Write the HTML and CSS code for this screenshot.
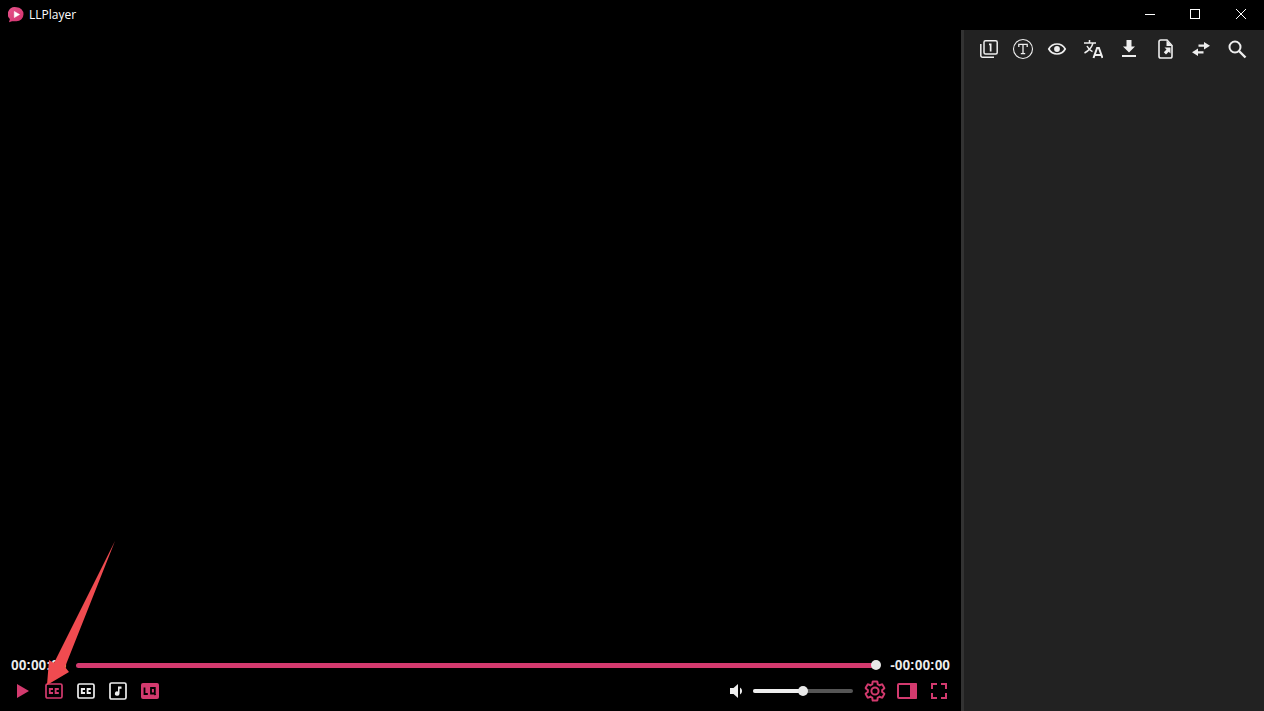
FILE: index.html
```html
<!DOCTYPE html>
<html lang="en">
<head>
    <meta charset="UTF-8">
    <title>LLPlayer</title>
    <link rel="stylesheet" href="styles.css">
</head>
<body>
    <div class="window">
        <!-- Title bar -->
        <div class="titlebar">
            <div class="app-name">
                <svg class="logo" width="16" height="16" viewBox="0 0 16 16">
                    <defs>
                        <linearGradient id="logoFill" x1="0" y1="0" x2="1" y2="1">
                            <stop offset="0" stop-color="#e8558c"/>
                            <stop offset="1" stop-color="#cf2f6c"/>
                        </linearGradient>
                    </defs>
                    <path d="M8.500 0.300a7 7 0 0 1 0 14H4l-3 1 .9-3.200A7 7 0 0 1 8.500 0.300z" fill="url(#logoFill)"/>
                    <path d="M6.300 4.500l5.200 3-5.200 3z" fill="#fff" stroke="#fff" stroke-width="0.600" stroke-linejoin="round"/>
                </svg>
                <span class="app-title">LLPlayer</span>
            </div>
            <div class="window-buttons">
                <button class="win-btn">
                    <svg width="12" height="12" viewBox="0 0 12 12"><path d="M2 6.500h10" stroke="#fff" fill="none"/></svg>
                </button>
                <button class="win-btn">
                    <svg width="12" height="12" viewBox="0 0 12 12"><rect x="1.500" y="1.500" width="9" height="9" stroke="#fff" fill="none"/></svg>
                </button>
                <button class="win-btn">
                    <svg width="12" height="12" viewBox="0 0 12 12"><path d="M1 1l10 10M11 1L1 11" stroke="#fff" fill="none"/></svg>
                </button>
            </div>
        </div>

        <div class="main">
            <!-- Video area -->
            <div class="video">
                <div class="seek-row">
                    <span class="time">00:00:00</span>
                    <div class="seek-track"><span class="thumb"></span></div>
                    <span class="time">-00:00:00</span>
                </div>
                <div class="control-row">
                    <div class="controls-left">
                        <svg width="20" height="20" viewBox="0 0 20 20"><path d="M5 3l12 7-12 7z" fill="#d33a6e"/></svg>
                        <svg width="20" height="20" viewBox="0 0 20 20">
                            <rect x="2" y="3" width="16" height="14" rx="1.500" fill="none" stroke="#d33a6e" stroke-width="1.700"/>
                            <path d="M9 8H5.800v4H9M14.800 8h-3.200v4h3.200" fill="none" stroke="#d33a6e" stroke-width="1.800"/>
                        </svg>
                        <svg width="20" height="20" viewBox="0 0 20 20">
                            <rect x="2" y="3" width="16" height="14" rx="1.500" fill="none" stroke="#eee" stroke-width="1.700"/>
                            <path d="M9 8H5.800v4H9M14.800 8h-3.200v4h3.200" fill="none" stroke="#eee" stroke-width="1.800"/>
                        </svg>
                        <svg width="20" height="20" viewBox="0 0 20 20">
                            <rect x="2" y="2" width="16" height="16" rx="1.500" fill="none" stroke="#eee" stroke-width="1.700"/>
                            <path d="M10 5.500h3.500v2.200h-2v4.800a2.300 2.300 0 1 1-1.500-2.100z" fill="#eee"/>
                        </svg>
                        <svg width="20" height="20" viewBox="0 0 20 20">
                            <rect x="1" y="2" width="18" height="16" rx="2" fill="#d33a6e"/>
                            <path d="M4.500 6.500v6.500h3.300M11 7h3.800v5.500H11zM13.500 11.500l2 2.500" fill="none" stroke="#000" stroke-width="1.800"/>
                        </svg>
                    </div>
                    <div class="controls-right">
                        <svg class="volume-icon" width="18" height="18" viewBox="0 0 18 18">
                            <path d="M1 6h3.500L9 2v14l-4.500-4H1z" fill="#eee"/>
                            <path d="M11 5.500a4 4 0 0 1 0 7z" fill="#eee"/>
                        </svg>
                        <div class="volume-track">
                            <div class="volume-fill"><span class="thumb"></span></div>
                        </div>
                        <div class="controls-tail">
                            <svg width="22" height="22" viewBox="1 1 22 22"><path d="M19.140 12.940c.04-.3.06-.61.06-.94 0-.32-.02-.64-.07-.94l2.030-1.580c.18-.14.23-.41.12-.61l-1.920-3.320c-.12-.22-.37-.29-.59-.22l-2.390.96c-.5-.38-1.030-.7-1.620-.94l-.36-2.540c-.04-.24-.24-.41-.48-.41h-3.840c-.24 0-.43.17-.47.41l-.36 2.540c-.59.24-1.130.57-1.620.94l-2.390-.96c-.22-.08-.47 0-.59.22L2.740 8.870c-.12.21-.08.47.12.61l2.030 1.580c-.05.3-.09.63-.09.94s.02.64.07.94l-2.030 1.580c-.18.14-.23.41-.12.61l1.920 3.320c.12.22.37.29.59.22l2.390-.96c.5.38 1.030.7 1.620.94l.36 2.540c.05.24.24.41.48.41h3.840c.24 0 .44-.17.47-.41l.36-2.540c.59-.24 1.130-.56 1.620-.94l2.390.96c.22.08.47 0 .59-.22l1.920-3.320c.12-.22.07-.47-.12-.61l-2.010-1.580zM12 15.600c-1.980 0-3.600-1.620-3.600-3.600s1.620-3.600 3.600-3.600 3.600 1.620 3.600 3.600-1.620 3.600-3.600 3.600z" fill="none" stroke="#d33a6e" stroke-width="2"/></svg>
                            <svg width="22" height="22" viewBox="0 0 22 22">
                                <rect x="2" y="4" width="18" height="14" rx="1" fill="none" stroke="#d33a6e" stroke-width="2"/>
                                <rect x="14" y="3" width="7" height="16" rx="1" fill="#d33a6e"/>
                            </svg>
                            <svg width="22" height="22" viewBox="0 0 22 22">
                                <path d="M4 9V4h5M13 4h5v5M18 13v5h-5M9 18H4v-5" fill="none" stroke="#d33a6e" stroke-width="2"/>
                            </svg>
                        </div>
                    </div>
                </div>
            </div>

            <!-- Subtitle side panel -->
            <div class="side-panel">
                <div class="panel-tools">
                    <span class="tool">
                        <svg width="20" height="20" viewBox="0 0 20 20">
                            <path d="M1.800 5v11.500a1.700 1.700 0 0 0 1.700 1.700H15" fill="none" stroke="#eee" stroke-width="1.500"/>
                            <rect x="5" y="1.800" width="13.200" height="13.200" rx="1.500" fill="none" stroke="#eee" stroke-width="1.500"/>
                            <path d="M10 4.500h2.500v8h-1.700V6.200H10z" fill="#eee"/>
                        </svg>
                    </span>
                    <span class="tool">
                        <svg width="22" height="22" viewBox="0 0 22 22">
                            <circle cx="11" cy="11" r="9.500" fill="none" stroke="#eee" stroke-width="1.100"/>
                            <path d="M6.800 9V6.300h8.400V9M11 6.300V15.700M8.800 15.700h4.400" fill="none" stroke="#eee" stroke-width="1.300"/>
                        </svg>
                    </span>
                    <span class="tool eye-tool">
                        <svg width="20" height="20" viewBox="0 0 20 20">
                            <path d="M1.800 10c1.900-3.400 4.700-5 8.200-5s6.300 1.600 8.200 5c-1.900 3.400-4.700 5-8.200 5s-6.300-1.600-8.200-5z" fill="none" stroke="#eee" stroke-width="1.700"/>
                            <circle cx="10" cy="10" r="2.900" fill="#eee"/>
                        </svg>
                    </span>
                    <span class="tool wide">
                        <svg width="20" height="20" viewBox="0 0 20 20">
                            <path d="M1 4h12M6.500 1V4M10 4C9 8 6 11.500 1.500 14M4 7c1.200 2.500 3.200 4.500 5.500 5.700" fill="none" stroke="#eee" stroke-width="1.500"/>
                            <path d="M10.500 19l3.600-10h1.800l3.600 10M11.800 16h6.400" fill="none" stroke="#eee" stroke-width="2"/>
                        </svg>
                    </span>
                    <span class="tool wide">
                        <svg width="20" height="20" viewBox="0 0 20 20"><path d="M7.500 1h5v6.500h3.500L10 13.500 4 7.500h3.500zM3 16h14v2H3z" fill="#eee"/></svg>
                    </span>
                    <span class="tool wide">
                        <svg width="20" height="20" viewBox="0 0 20 20">
                            <path d="M4 2.800a1.800 1.800 0 0 1 1.800-1.800H12l5 5.500v10.700a1.800 1.800 0 0 1-1.800 1.800H5.800A1.800 1.800 0 0 1 4 17.200z" fill="none" stroke="#eee" stroke-width="1.600"/>
                            <path d="M11.500 1.500V7H17z" fill="#eee"/>
                            <path d="M9.500 8.500H15.500V14.500l-1.800-1.800-2.700 2.800-2.200-2.200 2.700-2.800z" fill="#eee"/>
                        </svg>
                    </span>
                    <span class="tool wide">
                        <svg width="20" height="20" viewBox="0 0 20 20"><path d="M13 3l6 3.700-6 3.700V7.800H7.500V5.600H13zM7 9.600v2.600h5.500v2.200H7V17l-6-3.700z" fill="#eee"/></svg>
                    </span>
                    <span class="tool wide">
                        <svg width="20" height="20" viewBox="0 0 20 20">
                            <circle cx="8" cy="8" r="5.500" fill="none" stroke="#eee" stroke-width="2"/>
                            <path d="M12 12l6.500 6.500" stroke="#eee" stroke-width="2.400"/>
                        </svg>
                    </span>
                </div>
            </div>
        </div>
    </div>

    <!-- Red annotation arrow drawn over the player -->
    <svg class="annotation" width="1264" height="711" viewBox="0 0 1264 711">
        <path d="M115 541L65 667 69 672 47 685 49 660 54 663z" fill="#f04b50"/>
    </svg>
</body>
</html>
```

FILE: styles.css
```css
html, body {
    height: 100%;
}

body {
    margin: 0;
    background-color: #000;
    color: #fff;
    font-family: "Liberation Sans", Arial, sans-serif;
    overflow: hidden;
    position: relative;
}

svg {
    display: block;
}

.window {
    display: flex;
    flex-direction: column;
    height: 100%;
}

.titlebar {
    display: flex;
    justify-content: space-between;
    height: 30px;
    flex-shrink: 0;
}

.app-name {
    display: flex;
    align-items: center;
    gap: 5px;
    padding-left: 8px;
    font-family: "Open Sans", sans-serif;
    font-size: 12px;
}

.app-title {
    margin-bottom: 2px;
}

.window-buttons {
    display: flex;
}

.win-btn {
    display: flex;
    align-items: center;
    justify-content: center;
    width: 46px;
    height: 28px;
    padding: 0;
    border: none;
    background: none;
}

.main {
    display: flex;
    flex: 1;
    min-height: 0;
}

.video {
    flex: 1;
    display: flex;
    flex-direction: column;
    justify-content: flex-end;
    padding: 0 11px 9px;
    min-width: 0;
}

.seek-row {
    display: flex;
    align-items: center;
    gap: 10px;
    height: 16px;
    margin-bottom: 7px;
}

.time {
    font-size: 13.8px;
    font-weight: bold;
    color: #eee;
}

.seek-track {
    flex: 1;
    height: 5px;
    margin-right: 4px;
    border-radius: 3px;
    background-color: #d33a6e;
    position: relative;
}

.thumb {
    position: absolute;
    right: -5px;
    top: 50%;
    width: 10px;
    height: 10px;
    margin-top: -5px;
    border-radius: 50%;
    background-color: #e8e8e8;
}

.control-row {
    display: flex;
    justify-content: space-between;
    align-items: center;
    height: 22px;
}

.controls-left {
    display: flex;
    align-items: center;
    gap: 12px;
    padding-left: 1px;
}

.controls-right {
    display: flex;
    align-items: center;
}

.volume-icon {
    margin-right: 6px;
}

.volume-track {
    width: 100px;
    height: 4px;
    border-radius: 2px;
    background-color: #555;
}

.volume-fill {
    width: 50%;
    height: 100%;
    border-radius: 2px;
    background-color: #eee;
    position: relative;
}

.controls-tail {
    display: flex;
    align-items: center;
    gap: 10px;
    margin-left: 11px;
}

.side-panel {
    width: 300px;
    flex-shrink: 0;
    background-color: #222;
    border-left: 3px solid #333;
}

.panel-tools {
    display: flex;
    align-items: center;
    padding: 8px 0 0 8px;
}

.tool {
    display: flex;
    justify-content: center;
    width: 34px;
}

.eye-tool {
    margin-right: 1px;
}

.tool.wide {
    width: 36px;
}

.annotation {
    position: absolute;
    left: 0;
    top: 0;
    pointer-events: none;
}
```
